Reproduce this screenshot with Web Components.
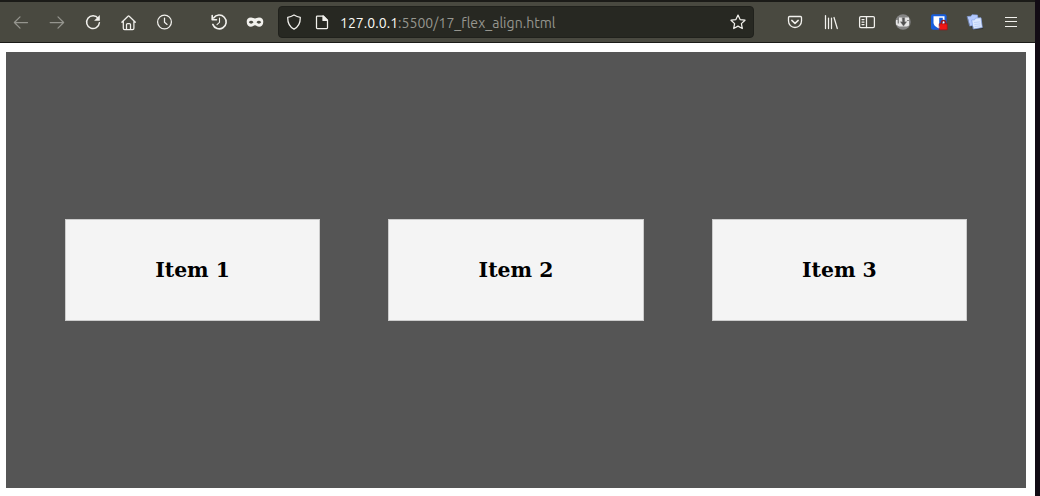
<!DOCTYPE html>
<html lang="en">
<head>
<meta charset="utf-8">
<title>Flex align</title>
<style>html,body{margin:0;height:100%;overflow:hidden}</style>
</head>
<body>
<browser-window>
  <nav-toolbar slot="toolbar"></nav-toolbar>
  <flex-demo>
    <flex-item>Item 1</flex-item>
    <flex-item>Item 2</flex-item>
    <flex-item>Item 3</flex-item>
  </flex-demo>
</browser-window>
<script>
const define = (name, html) => customElements.define(name, class extends HTMLElement {
  constructor() {
    super();
    this.attachShadow({ mode: 'open' }).innerHTML = html;
  }
});

const icons = {
  back: '<g opacity=".45"><path d="M24.5 18.5H11.5M17 12.9l-5.6 5.6 5.6 5.6"/></g>',
  forward: '<g opacity=".45"><path d="M11.2 18.5h13.3M19 12.9l5.6 5.6-5.6 5.6"/></g>',
  reload: '<path stroke-width="1.5" d="M23.2 14.4A6.4 6.4 0 1 0 24.4 18.8"/><path fill="currentColor" stroke="none" d="M24.8 11v5.7h-5.7z"/>',
  home: '<path d="M10.8 18.2l6.2-6q.6-.5 1.2 0l6.2 6M12.3 17v7.2q0 1.3 1.3 1.3h8q1.3 0 1.3-1.3V17M15.5 25.200v-4.700q0-1 1-1h2q1 0 1 1v4.700"/>',
  clock: '<circle cx="17.5" cy="18" r="6.9"/><path d="M17.5 14v4.200l2.600 2.200"/>',
  history: '<path stroke-width="1.600" d="M12.6 14A6.900 6.900 0 1 1 11.800 20.400M11.200 11.500v4.300h4.300"/><path stroke-width="1.100" d="M18.500 14v4.300l-2.500 2.300"/>',
  mask: '<path fill="currentColor" stroke="none" fill-rule="evenodd" d="M14 13.500c1.800 0 2.800.9 4 .9s2.200-.9 4-.9c3 0 4.300 1.700 4.300 4.300 0 3.200-1.900 5-4.100 5-2.100 0-2.800-1.500-4.200-1.500s-2.100 1.500-4.200 1.500c-2.200 0-4.100-1.800-4.100-5 0-2.600 1.300-4.300 4.300-4.300zm-2.200 4.700c1.300 1.900 3.400 1.900 4.700 0-1.300-1.900-3.400-1.900-4.700 0zm12.400 0c-1.300-1.900-3.400-1.900-4.700 0 1.300 1.900 3.400 1.900 4.700 0z"/>',
  shield: '<path d="M18 11q3 1.900 6.300 2.400c.1 5-1.800 9.300-6.300 11.700-4.500-2.400-6.400-6.700-6.300-11.700Q15 12.900 18 11z"/>',
  page: '<path d="M13.300 12h6l4.200 4.200v7.500q0 .8-.8.8h-9.400q-.8 0-.8-.8V12.800q0-.8.8-.8z"/><path fill="currentColor" d="M19 12v4.400h4.400z"/>',
  star: '<path d="M18 11.100l2.100 4.500 4.900.6-3.600 3.400.9 4.900-4.300-2.400-4.300 2.400.9-4.900L11 16.200l4.900-.6z"/>',
  pocket: '<path stroke-width="1.300" d="M12.600 12.500h10.800q1.100 0 1.100 1.100v3.400a6.500 6.500 0 0 1-13 0v-3.400q0-1.100 1.100-1.100z"/><path stroke-width="1.500" d="M14.800 16.400l3.200 3 3.200-3"/>',
  library: '<path d="M12.500 11.500v13M15.500 14v10.500M18.500 14v10.500M21 13.500L24.300 24.500"/>',
  sidebar: '<rect x="10.600" y="12.500" width="14.800" height="11" rx="1.300"/><path d="M17.500 12.500v11M13 15.500h2M13 18h2M13 20.500h2"/>',
  download: '<circle cx="18" cy="18" r="7.700" fill="#858585" stroke="none"/><path fill="#e5e5e5" stroke="none" d="M11 16h1.600v3.500H14V13.500h10v2.500h-2v1h2v4.500l-2 1h-8l-3-2z"/><path fill="#505050" stroke="#999" stroke-width=".4" d="M17.200 13.500h2.600v4.200h2L18.500 22.200l-3.300-4.500h2z"/>',
  vault: '<rect x="10" y="10.300" width="15.600" height="15.500" rx="2" fill="#175ddc" stroke="none"/><path fill="#fff" stroke="none" d="M12.500 12.300h11v6.200c0 3-3 4.700-5.500 6.100-2.500-1.400-5.500-3.100-5.500-6.100z"/><path fill="#175ddc" stroke="none" d="M18.200 13.800h3.600v4.700q0 2-3.600 4z"/><path stroke="#9c1717" stroke-width="1.500" d="M20.400 20v-1.400a2.100 2.100 0 0 1 4.200 0V20"/><rect x="18.600" y="19.800" width="7.600" height="6" fill="#f01616" stroke="#a51010" stroke-width=".7"/>',
  copies: '<path fill="#25262b" stroke="none" opacity=".6" d="M12 20.800l4.500 5.200 10-1-1.500-2z"/><path fill="#b3c9ff" stroke="#88a5e5" stroke-width=".6" d="M10.500 12.500l3.500-.3 1-1.500 5.500.3 1 9.500-8.500 1.500z"/><path fill="#dbe7ff" stroke="#8aa6e6" stroke-width=".7" d="M15 16l2.600-.2.900-1.700 5.500-.3 1.300 9.700-8.800 1.500z"/><path stroke="#afc5f4" stroke-width=".7" d="M17.500 18.500l5-.6M17.800 20.500l5-.6M18 22.500l5-.6"/>',
  menu: '<path stroke-width="1.200" stroke-linecap="butt" d="M12 13.500h12M12 17.500h12M12 22.500h12"/>'
};

customElements.define('tool-icon', class extends HTMLElement {
  constructor() {
    super();
    this.attachShadow({ mode: 'open' });
  }
  connectedCallback() {
    this.shadowRoot.innerHTML = `<style>
      :host{display:block;flex:none;width:36px;height:36px;color:#f2f1ed}
      svg{display:block}
    </style><svg width="36" height="36" viewBox="0 0 36 36" fill="none" stroke="currentColor" stroke-width="1.25" stroke-linecap="round" stroke-linejoin="round">${icons[this.getAttribute('name')]}</svg>`;
  }
});

define('url-bar', `<style>
  :host{display:flex;align-items:center;box-sizing:border-box;width:476px;height:32px;background:#272822;border:1px solid #20211c;border-radius:4px;padding:0 0 0 1px;color:#96968f;font:14px/20px Ubuntu,"Noto Sans",sans-serif}
  tool-icon{width:28px;margin-left:-4px;margin-right:4px}
  .shield{margin-left:-4px}
  .star{margin:0 -3px 0 auto;width:36px}
  .url{margin-left:4px;padding-top:2px;white-space:pre;letter-spacing:.04px}
  b{font-weight:400;color:#fbfaf5}
</style>
<tool-icon class="shield" name="shield"></tool-icon><tool-icon name="page"></tool-icon>
<span class="url"><b>127.0.0.1</b>:5500/17_flex_align.html</span>
<tool-icon class="star" name="star"></tool-icon>`);

define('nav-toolbar', `<style>
  :host{display:flex;align-items:center;box-sizing:border-box;height:43px;background:#494940;border-top:2px solid #1b1b18;border-bottom:1px solid #1b1b18;padding:0 6px 0 3px}
  .group{display:flex}
  .extra{margin-left:18px}
  url-bar{margin-left:5px}
  .end{margin-left:auto}
</style>
<div class="group"><tool-icon name="back"></tool-icon><tool-icon name="forward"></tool-icon><tool-icon name="reload"></tool-icon><tool-icon name="home"></tool-icon><tool-icon name="clock"></tool-icon></div>
<div class="group extra"><tool-icon name="history"></tool-icon><tool-icon name="mask"></tool-icon></div>
<url-bar></url-bar>
<div class="group end"><tool-icon name="pocket"></tool-icon><tool-icon name="library"></tool-icon><tool-icon name="sidebar"></tool-icon><tool-icon name="download"></tool-icon><tool-icon name="vault"></tool-icon><tool-icon name="copies"></tool-icon><tool-icon name="menu"></tool-icon></div>`);

define('flex-item', `<style>
  :host{display:flex;align-items:center;justify-content:center;box-sizing:border-box;width:255.2px;height:102px;background:#f4f4f4;border:1px solid #ccc;color:#000;font:bold 20.4px/24px "DejaVu Serif",serif}
</style><slot></slot>`);

define('flex-demo', `<style>
  :host{display:flex;align-items:center;justify-content:space-between;box-sizing:border-box;height:436px;padding:0 59px;background:#555}
</style><slot></slot>`);

define('browser-window', `<style>
  :host{display:flex;flex-direction:column;box-sizing:border-box;height:496px;border-right:5px solid #120b14;background:#fff}
  main{padding:9px 9px 8px 6px}
</style><slot name="toolbar"></slot><main><slot></slot></main>`);
</script>
</body>
</html>
